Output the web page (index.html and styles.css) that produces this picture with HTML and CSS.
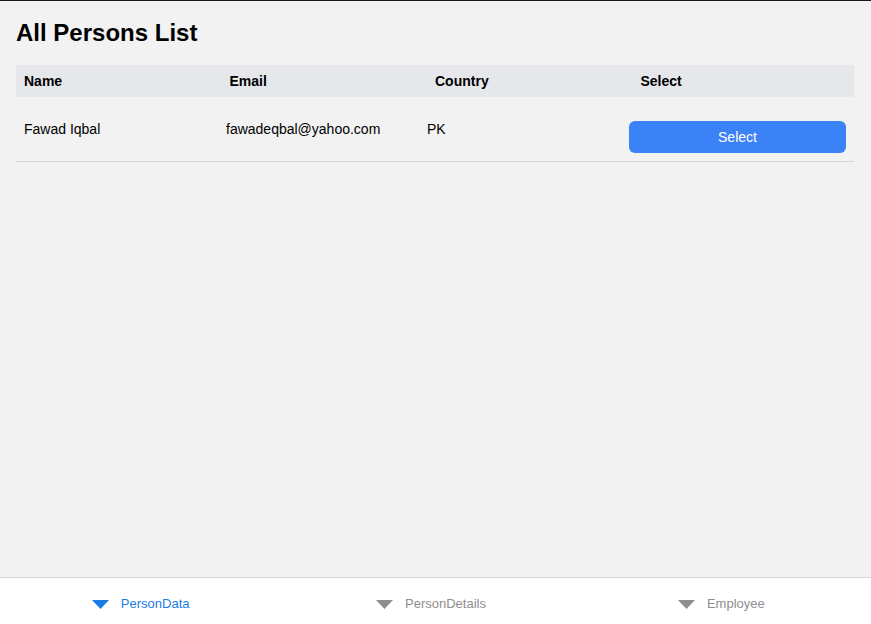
FILE: index.html
```html
<!DOCTYPE html>
<html>
<head>
<meta charset="utf-8">
<link rel="stylesheet" href="styles.css">
</head>
<body>
<div class="app">
  <main class="screen">
    <h1 class="title">All Persons List</h1>
    <div class="table">
      <div class="thead">
        <div class="th">Name</div>
        <div class="th">Email</div>
        <div class="th">Country</div>
        <div class="th">Select</div>
      </div>
      <div class="row">
        <div class="td">Fawad Iqbal</div>
        <div class="td">fawadeqbal@yahoo.com</div>
        <div class="td">PK</div>
        <div class="td"><button class="btn">Select</button></div>
      </div>
    </div>
  </main>
  <nav class="tabbar">
    <div class="tab active">
      <svg class="tri" width="17" height="9" viewBox="0 0 17 9"><path d="M0 0H17L8.5 9Z" fill="currentColor"/></svg>
      <span>PersonData</span>
    </div>
    <div class="tab">
      <svg class="tri" width="17" height="9" viewBox="0 0 17 9"><path d="M0 0H17L8.5 9Z" fill="currentColor"/></svg>
      <span>PersonDetails</span>
    </div>
    <div class="tab">
      <svg class="tri" width="17" height="9" viewBox="0 0 17 9"><path d="M0 0H17L8.5 9Z" fill="currentColor"/></svg>
      <span>Employee</span>
    </div>
  </nav>
</div>
</body>
</html>
```
FILE: styles.css
```css
* { box-sizing: border-box; }
html, body { margin: 0; padding: 0; height: 100%; }
body {
  font-family: "Liberation Sans", Arial, sans-serif;
  background: #f2f2f2;
  color: #000;
}
.app {
  height: 624px;
  display: flex;
  flex-direction: column;
  border-top: 1px solid #1a1a1a;
}
.screen {
  flex: 1;
  padding: 0 17px 0 16px;
}
.title {
  margin: 0;
  padding-top: 18px;
  font-size: 24px;
  line-height: 28px;
  font-weight: bold;
  height: 64px;
}
.thead {
  display: grid;
  grid-template-columns: repeat(4, 1fr);
  background: #e5e7eb;
  height: 32px;
  padding: 0 8px;
  align-items: center;
}
.th {
  font-size: 14px;
  font-weight: bold;
  line-height: 16px;
}
.row {
  display: grid;
  grid-template-columns: 202px 201px 202px 1fr;
  padding: 24px 8px 8px;
  border-bottom: 1px solid #d4d6da;
  align-items: start;
}
.td {
  font-size: 14px;
  line-height: 16px;
}
.btn {
  display: block;
  width: 100%;
  height: 32px;
  border: none;
  border-radius: 6px;
  background: #3b82f6;
  color: #fff;
  font-family: "Liberation Sans", Arial, sans-serif;
  font-size: 14px;
  margin-top: 0;
  cursor: pointer;
}
.tabbar {
  height: 47px;
  background: #fff;
  border-top: 1px solid #d8d8d8;
  display: grid;
  grid-template-columns: repeat(3, 1fr);
}
.tab {
  display: flex;
  align-items: center;
  justify-content: center;
  gap: 12px;
  color: #8e8e8f;
  font-size: 13px;
  padding: 5px 9px 0 0;
}
.tab.active { color: #1a7ce6; }
.tri { display: block; margin-top: 1px; }
```
